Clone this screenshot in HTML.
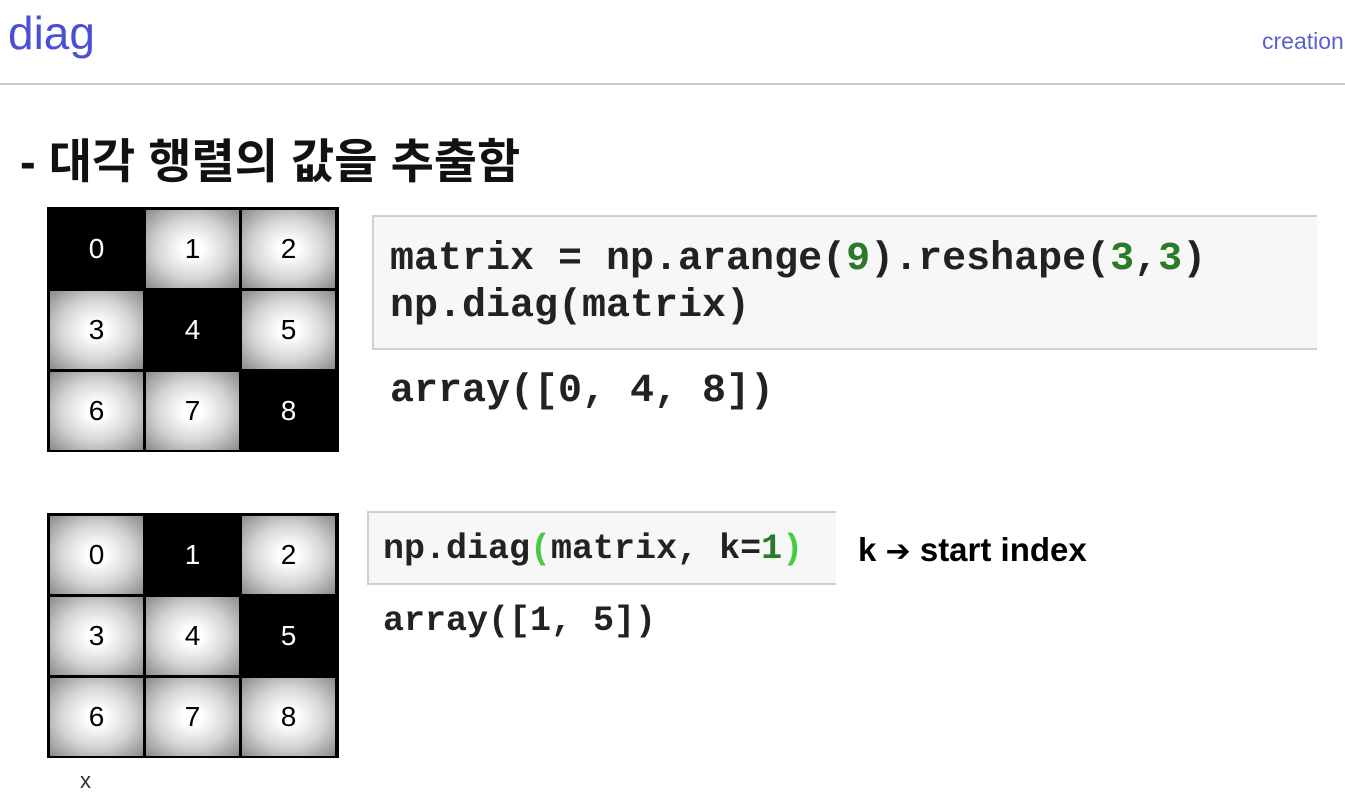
<!DOCTYPE html>
<html><head><meta charset="utf-8"><style>
body{margin:0;width:1345px;height:788px;background:#fff;position:relative;overflow:hidden;font-family:"Liberation Sans","Noto Sans CJK KR",sans-serif}
.a{position:absolute}
.grid{position:absolute;left:47px;width:292px;height:245px;background:#000;box-sizing:border-box;padding:3px;display:grid;grid-template-columns:93px 93px 93px;grid-template-rows:78px 78px 78px;gap:3px}
.c{display:flex;align-items:center;justify-content:center;font-size:28px;color:#000;background:radial-gradient(ellipse at center,#fff 15%,#d4d4d4 55%,#8a8a8a 100%)}
.c.b{background:#000;color:#fff}
.code{font-family:"Liberation Mono",monospace;font-weight:bold;color:#222;white-space:pre}
.box{position:absolute;background:#f7f7f7;border:2px solid #d0d0d0;box-sizing:border-box}
</style></head><body>
<div class="a" style="left:8px;top:6px;font-size:46px;color:#4a4fd8">diag</div>
<div class="a" style="left:1262px;top:28px;font-size:23px;color:#5a62d0;white-space:nowrap">creation</div>
<div class="a" style="left:0;top:83px;width:1345px;height:2px;background:#c8c8c8"></div>
<div class="a" style="left:20px;top:123px;font-size:47px;font-weight:bold;color:#111;white-space:nowrap">- 대각 행렬의 값을 추출함</div>

<div class="grid" style="top:207px">
<div class="c b">0</div><div class="c">1</div><div class="c">2</div>
<div class="c">3</div><div class="c b">4</div><div class="c">5</div>
<div class="c">6</div><div class="c">7</div><div class="c b">8</div>
</div>
<div class="grid" style="top:513px">
<div class="c">0</div><div class="c b">1</div><div class="c">2</div>
<div class="c">3</div><div class="c">4</div><div class="c b">5</div>
<div class="c">6</div><div class="c">7</div><div class="c">8</div>
</div>

<div class="box" style="left:372px;top:215px;width:945px;height:135px;border-right:none"></div>
<div class="a code" style="left:390px;top:236px;font-size:40px;line-height:47px">matrix = np.arange(<span style="color:#2a7a2a">9</span>).reshape(<span style="color:#2a7a2a">3</span>,<span style="color:#2a7a2a">3</span>)
np.diag(matrix)</div>
<div class="a code" style="left:390px;top:368px;font-size:40px;line-height:47px">array([0, 4, 8])</div>

<div class="box" style="left:367px;top:511px;width:469px;height:74px;border-right:none"></div>
<div class="a code" style="left:383px;top:528px;font-size:35px;line-height:42px">np.diag<span style="color:#4c4">(</span>matrix, k=<span style="color:#2a7a2a">1</span><span style="color:#4c4">)</span></div>
<div class="a code" style="left:383px;top:600px;font-size:35px;line-height:42px">array([1, 5])</div>
<div class="a" style="left:858px;top:531px;font-size:33px;font-weight:bold;color:#000;white-space:nowrap">k <span style="font-family:'DejaVu Sans';font-size:30px">➔</span> start index</div>
<div class="a" style="left:80px;top:768px;font-size:22px;color:#333">x</div>
</body></html>
